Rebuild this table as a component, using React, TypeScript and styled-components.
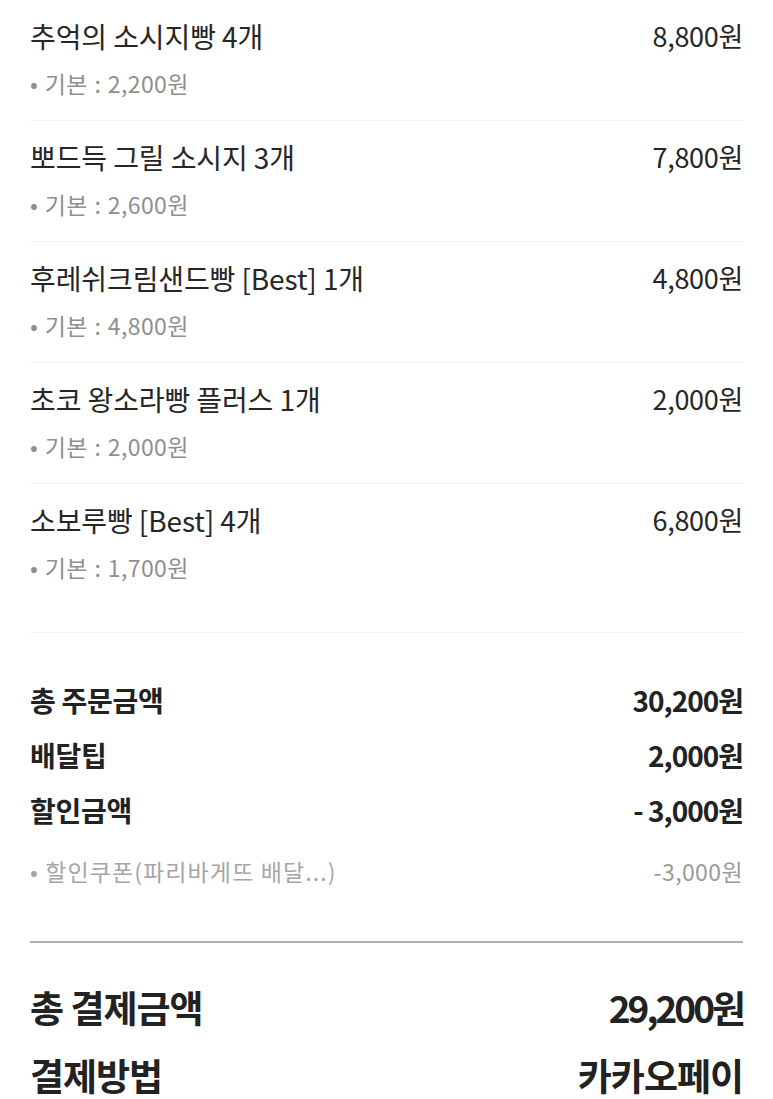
import React from 'react';
import styled, { createGlobalStyle } from 'styled-components';

const GlobalStyle = createGlobalStyle`
  html, body {
    margin: 0;
    padding: 0;
    background: #ffffff;
  }
  body {
    font-family: "Noto Sans CJK KR", "Noto Sans", sans-serif;
    color: #252525;
  }
`;

const items = [
  { name: '추억의 소시지빵 4개', base: '2,200원', price: '8,800원' },
  { name: '뽀드득 그릴 소시지 3개', base: '2,600원', price: '7,800원' },
  { name: '후레쉬크림샌드빵 [Best] 1개', base: '4,800원', price: '4,800원' },
  { name: '초코 왕소라빵 플러스 1개', base: '2,000원', price: '2,000원' },
  { name: '소보루빵 [Best] 4개', base: '1,700원', price: '6,800원' },
];

const App = () => {
  return (
    <Page>
      <GlobalStyle />
      <ItemList>
        {items.map((item, i) => (
          <Item key={item.name} last={i === items.length - 1}>
            <ItemTop>
              <ItemName>{item.name}</ItemName>
              <ItemPrice>{item.price}</ItemPrice>
            </ItemTop>
            <ItemOption>• 기본 : {item.base}</ItemOption>
          </Item>
        ))}
      </ItemList>

      <Summary>
        <SummaryRow>
          <SummaryLabel>총 주문금액</SummaryLabel>
          <SummaryValue>30,200원</SummaryValue>
        </SummaryRow>
        <SummaryRow>
          <SummaryLabel>배달팁</SummaryLabel>
          <SummaryValue>2,000원</SummaryValue>
        </SummaryRow>
        <SummaryRow>
          <SummaryLabel>할인금액</SummaryLabel>
          <SummaryValue>- 3,000원</SummaryValue>
        </SummaryRow>
        <DetailRow>
          <DetailLabel>• 할인쿠폰(파리바게뜨 배달...)</DetailLabel>
          <DetailValue>-3,000원</DetailValue>
        </DetailRow>
      </Summary>

      <Total>
        <TotalRow>
          <TotalLabel>총 결제금액</TotalLabel>
          <TotalAmount>29,200원</TotalAmount>
        </TotalRow>
        <TotalRow>
          <TotalLabel>결제방법</TotalLabel>
          <TotalLabel>카카오페이</TotalLabel>
        </TotalRow>
      </Total>
    </Page>
  );
};

export default App;

const Page = styled.div`
  width: 773px;
  padding: 0 30px;
  box-sizing: border-box;
`;

const ItemList = styled.div`
  display: flex;
  flex-direction: column;
`;

const Item = styled.div<{ last?: boolean }>`
  display: flex;
  flex-direction: column;
  gap: 14px;
  padding: 18px 0 ${(p) => (p.last ? '50px' : '22px')};
  border-bottom: 1px solid #efefef;
`;

const ItemTop = styled.div`
  display: flex;
  justify-content: space-between;
  align-items: flex-start;
`;

const ItemName = styled.span`
  font-size: 28px;
  line-height: 36px;
  color: #262626;
  letter-spacing: -0.1px;
`;

const ItemPrice = styled.span`
  font-size: 27px;
  line-height: 36px;
  color: #262626;
  letter-spacing: -0.3px;
`;

const ItemOption = styled.span`
  font-size: 23px;
  line-height: 30px;
  color: #8f8f8f;
  letter-spacing: 0.4px;
  word-spacing: 1px;
`;

const Summary = styled.div`
  display: flex;
  flex-direction: column;
  gap: 15px;
  padding: 47px 0 55px;
  border-bottom: 2px solid #b0b0b0;
`;

const SummaryRow = styled.div`
  display: flex;
  justify-content: space-between;
  align-items: center;
  height: 40px;
`;

const SummaryLabel = styled.span`
  font-size: 28px;
  font-weight: 700;
  color: #222222;
  letter-spacing: -0.3px;
`;

const SummaryValue = styled(SummaryLabel)`
  letter-spacing: -1px;
`;

const DetailRow = styled.div`
  display: flex;
  justify-content: space-between;
  align-items: center;
  height: 30px;
  margin-top: 11px;
`;

const DetailLabel = styled.span`
  font-size: 23px;
  color: #a6a6a6;
  letter-spacing: 1.1px;
`;

const DetailValue = styled.span`
  font-size: 23px;
  color: #9a9a9a;
  letter-spacing: 0.4px;
`;

const Total = styled.div`
  display: flex;
  flex-direction: column;
  gap: 28px;
  padding-top: 44px;
`;

const TotalRow = styled.div`
  display: flex;
  justify-content: space-between;
  align-items: center;
  height: 40px;
`;

const TotalLabel = styled.span`
  font-size: 37px;
  line-height: 40px;
  font-weight: 700;
  color: #222222;
  letter-spacing: -1px;
`;

const TotalAmount = styled(TotalLabel)`
  letter-spacing: -3px;
`;
